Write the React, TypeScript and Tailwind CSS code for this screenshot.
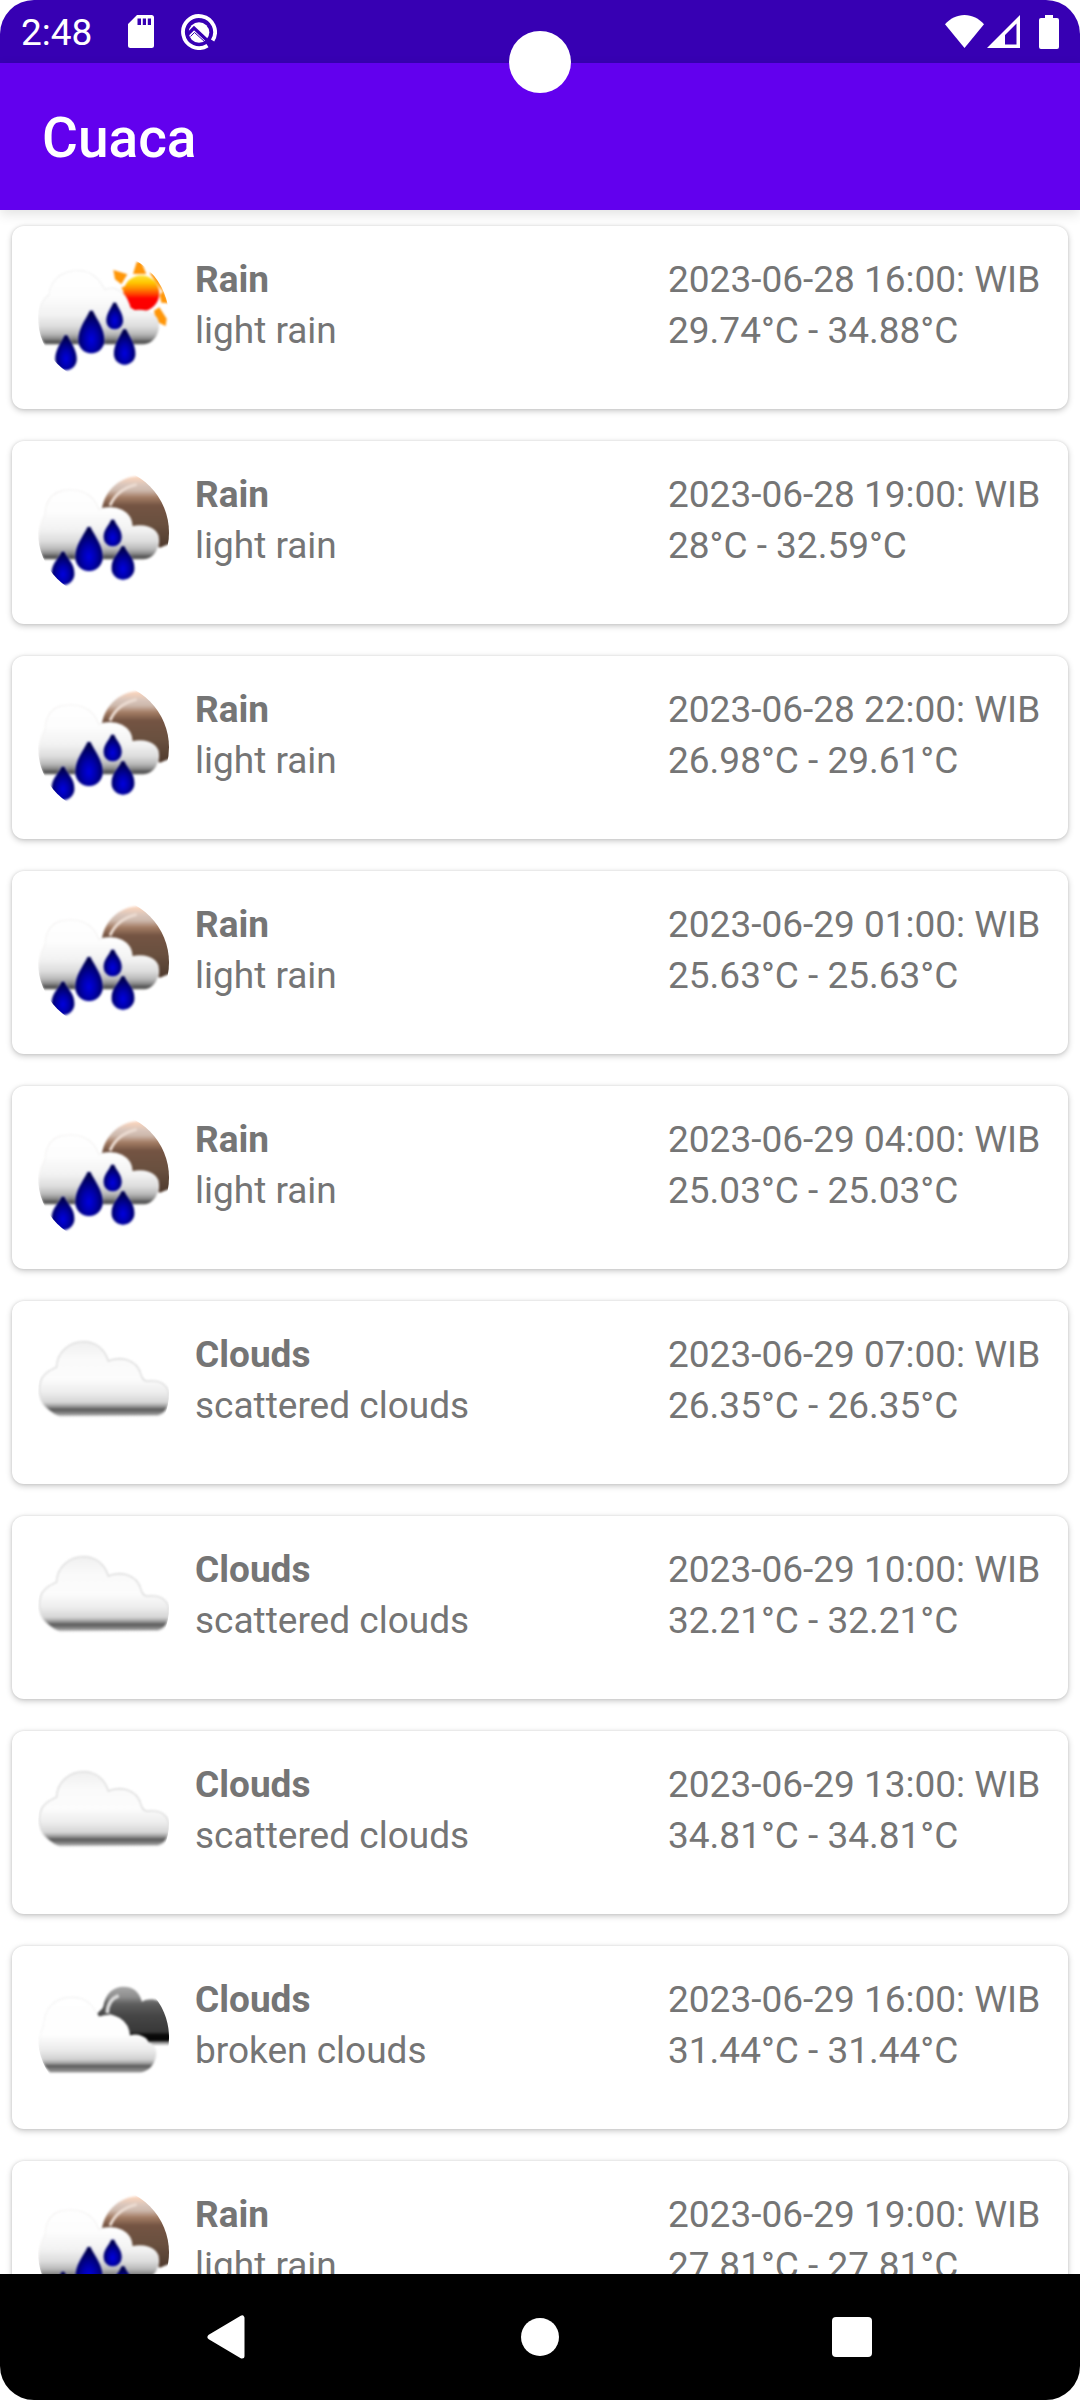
import React from "react";

type IconKind = "rain-day" | "rain-night" | "scattered" | "broken";

interface Forecast {
  kind: IconKind;
  main: string;
  description: string;
  time: string;
  range: string;
}

const forecasts: Forecast[] = [
  { kind: "rain-day", main: "Rain", description: "light rain", time: "2023-06-28 16:00: WIB", range: "29.74°C - 34.88°C" },
  { kind: "rain-night", main: "Rain", description: "light rain", time: "2023-06-28 19:00: WIB", range: "28°C - 32.59°C" },
  { kind: "rain-night", main: "Rain", description: "light rain", time: "2023-06-28 22:00: WIB", range: "26.98°C - 29.61°C" },
  { kind: "rain-night", main: "Rain", description: "light rain", time: "2023-06-29 01:00: WIB", range: "25.63°C - 25.63°C" },
  { kind: "rain-night", main: "Rain", description: "light rain", time: "2023-06-29 04:00: WIB", range: "25.03°C - 25.03°C" },
  { kind: "scattered", main: "Clouds", description: "scattered clouds", time: "2023-06-29 07:00: WIB", range: "26.35°C - 26.35°C" },
  { kind: "scattered", main: "Clouds", description: "scattered clouds", time: "2023-06-29 10:00: WIB", range: "32.21°C - 32.21°C" },
  { kind: "scattered", main: "Clouds", description: "scattered clouds", time: "2023-06-29 13:00: WIB", range: "34.81°C - 34.81°C" },
  { kind: "broken", main: "Clouds", description: "broken clouds", time: "2023-06-29 16:00: WIB", range: "31.44°C - 31.44°C" },
  { kind: "rain-night", main: "Rain", description: "light rain", time: "2023-06-29 19:00: WIB", range: "27.81°C - 27.81°C" },
];

/* Gradients and the soft edge shared by all weather drawings. */
function WeatherDefs() {
  return (
    <svg className="absolute size-0" aria-hidden="true">
      <defs>
        <filter id="soft" x="-10%" y="-10%" width="120%" height="120%" colorInterpolationFilters="sRGB">
          <feGaussianBlur stdDeviation="2.5" />
        </filter>
        <linearGradient id="rainCloud" gradientUnits="userSpaceOnUse" x1="0" y1="90" x2="0" y2="314">
          <stop offset="0" stopColor="#ffffff" />
          <stop offset="0.35" stopColor="#fdfdfd" />
          <stop offset="0.6" stopColor="#f2f2f2" />
          <stop offset="0.76" stopColor="#dcdcdc" />
          <stop offset="0.86" stopColor="#b8b8b8" />
          <stop offset="0.92" stopColor="#8a8a8a" />
          <stop offset="0.96" stopColor="#545454" />
          <stop offset="1" stopColor="#6a6a6a" />
        </linearGradient>
        <radialGradient id="drop" cx="0.5" cy="0.68" r="0.6">
          <stop offset="0" stopColor="#0000e0" />
          <stop offset="0.4" stopColor="#0000ae" />
          <stop offset="1" stopColor="#00004c" />
        </radialGradient>
        <linearGradient id="sun" gradientUnits="userSpaceOnUse" x1="0" y1="106" x2="0" y2="214">
          <stop offset="0" stopColor="#ffe23a" />
          <stop offset="0.2" stopColor="#ffc800" />
          <stop offset="0.38" stopColor="#ff8500" />
          <stop offset="0.54" stopColor="#ff3a00" />
          <stop offset="0.64" stopColor="#ff0000" />
          <stop offset="1" stopColor="#fa0000" />
        </linearGradient>
        <linearGradient id="moon" gradientUnits="userSpaceOnUse" x1="0" y1="66" x2="0" y2="270">
          <stop offset="0" stopColor="#fbd5bd" />
          <stop offset="0.12" stopColor="#d8c5bb" />
          <stop offset="0.2" stopColor="#cdb8ac" />
          <stop offset="0.3" stopColor="#a37c64" />
          <stop offset="0.42" stopColor="#745443" />
          <stop offset="0.7" stopColor="#69503f" />
          <stop offset="1" stopColor="#523d30" />
        </linearGradient>
        <linearGradient id="paleCloud" gradientUnits="userSpaceOnUse" x1="0" y1="64" x2="0" y2="287">
          <stop offset="0" stopColor="#f0f0f0" />
          <stop offset="0.25" stopColor="#fafafa" />
          <stop offset="0.5" stopColor="#fcfcfc" />
          <stop offset="0.68" stopColor="#eeeeee" />
          <stop offset="0.82" stopColor="#d6d6d6" />
          <stop offset="0.87" stopColor="#a2a2a2" />
          <stop offset="0.92" stopColor="#585858" />
          <stop offset="0.96" stopColor="#848484" />
          <stop offset="1" stopColor="#a0a0a0" />
        </linearGradient>
        <linearGradient id="frontCloud" gradientUnits="userSpaceOnUse" x1="0" y1="95" x2="0" y2="324">
          <stop offset="0" stopColor="#ffffff" />
          <stop offset="0.5" stopColor="#fefefe" />
          <stop offset="0.7" stopColor="#ebebeb" />
          <stop offset="0.82" stopColor="#d2d2d2" />
          <stop offset="0.87" stopColor="#a4a4a4" />
          <stop offset="0.91" stopColor="#585858" />
          <stop offset="0.95" stopColor="#808080" />
          <stop offset="1" stopColor="#969696" />
        </linearGradient>
        <linearGradient id="darkCloud" gradientUnits="userSpaceOnUse" x1="0" y1="64" x2="0" y2="240">
          <stop offset="0" stopColor="#a8a8a8" />
          <stop offset="0.18" stopColor="#8e8e8e" />
          <stop offset="0.3" stopColor="#5e5e5e" />
          <stop offset="0.5" stopColor="#464646" />
          <stop offset="0.78" stopColor="#383838" />
          <stop offset="0.82" stopColor="#0c0c0c" />
          <stop offset="0.92" stopColor="#050505" />
          <stop offset="0.96" stopColor="#a0a0a0" />
          <stop offset="1" stopColor="#c8c8c8" />
        </linearGradient>
      </defs>
    </svg>
  );
}

function Drop({ x, top, bottom, width }: { x: number; top: number; bottom: number; width: number }) {
  const r = width / 2;
  const cy = bottom - r;
  const d = `M${x - 4} ${top} L${x + 4} ${top} C${x + r * 0.5} ${top + r * 0.8} ${x + r} ${cy - r * 0.9} ${x + r} ${cy} A${r} ${r} 0 0 1 ${x - r} ${cy} C${x - r} ${cy - r * 0.9} ${x - r * 0.5} ${top + r * 0.8} ${x - 4} ${top}Z`;
  return <path d={d} fill="url(#drop)" stroke="#aab0e6" strokeOpacity="0.4" strokeWidth="6" paintOrder="stroke" />;
}

function RainDay() {
  return (
    <>
      <g fill="#ff9608">
        <path d="M350 66 L364 66 L379 102 L339 102Z" />
        <path d="M280 90 L322 103 L304 133 L285 118Z" />
        <path d="M388 98 L412 102 L446 190 L424 188 L419 165 L428 155Z" />
        <path d="M402 212 L418 202 L440 236 L437 258 L408 244Z" />
        <path d="M304 143 L324 134 L326 162 L314 160Z" />
      </g>
      <circle cx="364" cy="160" r="54" fill="url(#sun)" />
      <path
        d="M57 265 C55 215 60 185 88 165 C95 115 130 93 175 93 C215 93 236 118 254 150 C286 134 322 158 332 216 C365 206 400 215 412 240 C424 270 405 311 370 313 L75 313 C62 298 57 280 57 265Z"
        fill="url(#rainCloud)"
        stroke="#ececec"
        strokeWidth="5"
        paintOrder="stroke"
      />
      <Drop x={214} top={212} bottom={340} width={78} />
      <Drop x={284} top={188} bottom={268} width={50} />
      <Drop x={138} top={286} bottom={390} width={64} />
      <Drop x={314} top={268} bottom={374} width={64} />
    </>
  );
}

function RainNight() {
  return (
    <>
      <path d="M246 160 C254 110 295 68 350 64 C400 66 460 150 460 262 L420 278 L330 240Z" fill="url(#moon)" />
      <path d="M270 152 C282 122 310 98 350 88" fill="none" stroke="#ecdcd2" strokeWidth="9" />
      <path
        d="M57 265 C55 235 60 210 76 180 C78 130 105 106 150 106 C200 106 222 130 236 164 C290 148 334 170 336 216 C370 208 404 218 413 242 C420 275 405 311 370 313 L72 313 C62 298 57 280 57 265Z"
        fill="url(#rainCloud)"
        stroke="#efedec"
        strokeWidth="5"
        paintOrder="stroke"
      />
      <Drop x={207} top={216} bottom={348} width={82} />
      <Drop x={278} top={194} bottom={274} width={54} />
      <Drop x={129} top={290} bottom={390} width={68} />
      <Drop x={309} top={274} bottom={374} width={68} />
    </>
  );
}

function ScatteredClouds() {
  return (
    <path
      d="M120 286 C105 284 90 272 78 260 C56 235 54 185 76 165 C90 150 105 148 112 142 C112 98 150 67 190 67 C228 67 254 90 264 126 C290 112 350 112 362 168 C370 186 378 186 388 185 C425 182 447 200 446 235 C444 268 432 280 412 285Z"
      fill="url(#paleCloud)"
      stroke="#dadada"
      strokeWidth="8"
      paintOrder="stroke"
    />
  );
}

function BrokenClouds() {
  return (
    <>
      <path
        d="M228 156 C232 138 246 138 250 124 C256 84 282 65 310 65 C342 65 358 82 366 110 C385 100 410 100 424 116 C450 150 460 200 460 240 L390 240 L320 215 L300 160 L272 148Z"
        fill="url(#darkCloud)"
      />
      <path d="M262 145 C262 115 276 100 296 92" fill="none" stroke="#dadada" strokeWidth="11" />
      <path
        d="M90 322 C70 300 56 275 57 245 C58 215 64 200 72 180 C76 125 110 98 155 98 C195 98 215 115 236 158 C285 142 325 165 328 214 C355 206 380 218 384 234 C410 240 410 270 404 285 C396 310 378 320 360 322Z"
        fill="url(#frontCloud)"
        stroke="#eeeeee"
        strokeWidth="5"
        paintOrder="stroke"
      />
    </>
  );
}

function WeatherIcon({ kind, label }: { kind: IconKind; label: string }) {
  const rainy = kind === "rain-day" || kind === "rain-night";
  return (
    <svg
      viewBox={rainy ? "54 36 393 393" : "54 21 393 393"}
      className="size-[131px] shrink-0 rounded-full"
      role="img"
      aria-label={label}
    >
      <g filter="url(#soft)">
        {kind === "rain-day" && <RainDay />}
        {kind === "rain-night" && <RainNight />}
        {kind === "scattered" && <ScatteredClouds />}
        {kind === "broken" && <BrokenClouds />}
      </g>
    </svg>
  );
}

function StatusBar() {
  return (
    <div className="flex h-[63px] shrink-0 items-center bg-[#3700b3] px-[21px] text-white">
      <span className="pt-[3px] text-[37px] leading-[60px]">2:48</span>
      <svg viewBox="0 0 26 33" className="ml-9 h-[33px] w-[26px]" fill="currentColor" aria-hidden="true">
        <path
          fillRule="evenodd"
          d="M9 0H23.5A2.5 2.5 0 0 1 26 2.5V30.5A2.5 2.5 0 0 1 23.5 33H2.5A2.5 2.5 0 0 1 0 30.5V9ZM9.5 3.5V10H13V3.5ZM14.8 3.5V10H18V3.5ZM19.8 3.5V10H23V3.5Z"
        />
      </svg>
      <svg viewBox="0 0 36 36" className="ml-[27px] size-9" aria-hidden="true">
        <path d="M26.5 31.6A16 16 0 1 1 31.6 26.5" fill="none" stroke="#fff" strokeWidth="3.8" />
        <circle cx="18" cy="18.5" r="10.3" fill="#fff" />
        <path d="M6 21L13 14L30 30" fill="none" stroke="#3700b3" strokeWidth="3.2" />
        <path d="M9.5 22.5L13.5 18.5L24 28" fill="none" stroke="#3700b3" strokeWidth="1" />
      </svg>
      <svg viewBox="0 0 39 33" className="ml-auto h-[33px] w-[39px]" fill="currentColor" aria-hidden="true">
        <path d="M19.5 33L0 9.3C5 3.5 12 0 19.5 0S34 3.5 39 9.3Z" />
      </svg>
      <svg viewBox="0 0 33 33" className="ml-[3px] size-[33px]" fill="currentColor" aria-hidden="true">
        <path fillRule="evenodd" d="M33 0V33H0ZM29.5 8.5L18 20V29.5H29.5Z" />
      </svg>
      <svg viewBox="0 0 20 34" className="ml-[19px] h-[34px] w-5" fill="currentColor" aria-hidden="true">
        <path d="M6 0H14V3H18A2 2 0 0 1 20 5V32A2 2 0 0 1 18 34H2A2 2 0 0 1 0 32V5A2 2 0 0 1 2 3H6Z" />
      </svg>
    </div>
  );
}

function ForecastCard({ item }: { item: Forecast }) {
  return (
    <li className="flex shrink-0 rounded-xl bg-white p-[26px] shadow-[0_2px_6px_rgba(0,0,0,0.22),0_0_3px_rgba(0,0,0,0.1)]">
      <WeatherIcon kind={item.kind} label={item.description} />
      <div className="ml-[26px] flex-1 pt-0.5">
        <p className="font-bold">{item.main}</p>
        <p>{item.description}</p>
      </div>
      <div className="w-[374px] shrink-0 pt-0.5 whitespace-nowrap">
        <p>{item.time}</p>
        <p>{item.range}</p>
      </div>
    </li>
  );
}

function NavigationBar() {
  return (
    <nav className="flex h-[126px] shrink-0 items-center justify-center bg-black">
      <button type="button" aria-label="Back" className="flex h-full w-[312px] items-center justify-center">
        <svg viewBox="1 0 44 44" className="size-11" aria-hidden="true">
          <path d="M5 22L37 3V41Z" fill="#fff" stroke="#fff" strokeWidth="5" strokeLinejoin="round" />
        </svg>
      </button>
      <button type="button" aria-label="Home" className="flex h-full w-[312px] items-center justify-center">
        <span className="size-[38px] rounded-full bg-white" />
      </button>
      <button type="button" aria-label="Recent apps" className="flex h-full w-[312px] items-center justify-center">
        <span className="size-10 rounded bg-white" />
      </button>
    </nav>
  );
}

export default function App() {
  return (
    <div className="bg-white">
      <div className="relative flex h-screen flex-col overflow-hidden rounded-[34px] bg-white font-['Roboto',sans-serif]">
        <WeatherDefs />
        <StatusBar />
        <header className="z-10 flex h-[147px] shrink-0 items-center bg-[#6200ee] px-[42px] pt-[3px] shadow-[0_4px_12px_rgba(0,0,0,0.12)]">
          <h1 className="text-[55px] font-medium text-white">Cuaca</h1>
        </header>
        <div className="absolute top-[31px] left-1/2 z-20 size-[62px] -translate-x-1/2 rounded-full bg-white" />
        <main className="min-h-0 flex-1 overflow-y-auto [scrollbar-width:none]">
          <ul className="flex flex-col gap-8 px-3 py-4 text-[37px] leading-[51px] text-[#757575]">
            {forecasts.map((item) => (
              <ForecastCard key={item.time} item={item} />
            ))}
          </ul>
        </main>
        <NavigationBar />
      </div>
    </div>
  );
}
